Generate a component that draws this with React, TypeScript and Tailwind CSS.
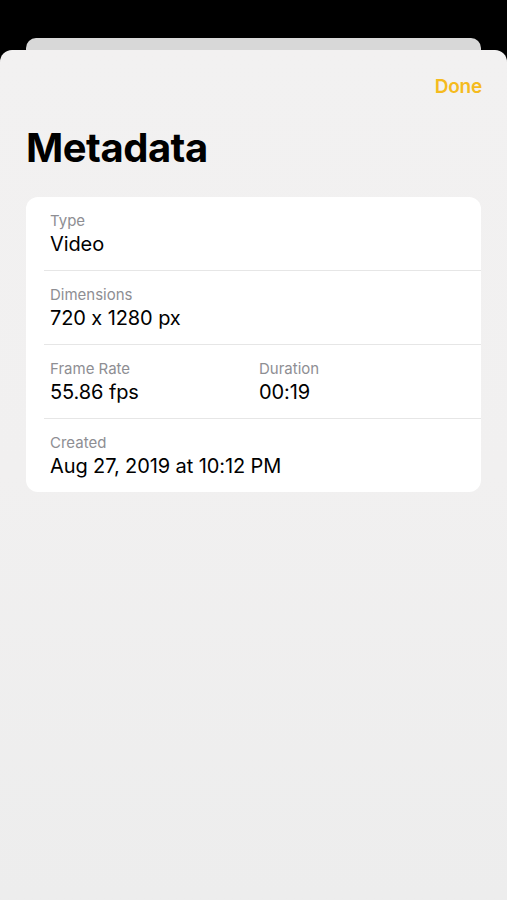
export default function App() {
  const font = { fontFamily: "Inter, 'Liberation Sans', sans-serif" };

  return (
    <div className="w-[507px] h-[900px] bg-black flex flex-col overflow-hidden" style={font}>
      {/* stacked sheet behind */}
      <div className="h-[38px] shrink-0" />
      <div className="mx-[26px] h-[12px] shrink-0 rounded-t-[10px] bg-[#d8d8d8]" />

      {/* front sheet */}
      <div className="flex-1 rounded-t-[12px] bg-gradient-to-b from-[#f2f1f1] via-[#f1f0f0] to-[#ededed] flex flex-col">
        <div className="flex justify-end px-[25px] pt-[10px] h-[64px]">
          <button className="text-[19px] font-semibold text-[#f5bb1e] leading-[24px] tracking-[-0.2px]">
            Done
          </button>
        </div>

        <h1 className="px-[26px] text-[40px] font-bold leading-[48px] text-black tracking-[-0.5px] mt-[10px]">
          Metadata
        </h1>

        <div className="mx-[26px] mt-[25px] bg-white rounded-[12px] overflow-hidden">
          <Row label="Type" value="Video" />
          <Row label="Dimensions" value="720 x 1280 px" divider />
          <div className="ml-[18px] border-t border-[#e6e6e6] flex">
            <Cell label="Frame Rate" value="55.86 fps" className="w-[209px]" />
            <Cell label="Duration" value="00:19" className="pl-0" />
          </div>
          <Row label="Created" value="Aug 27, 2019 at 10:12 PM" divider />
        </div>
      </div>
    </div>
  );
}

function Row({ label, value, divider }: { label: string; value: string; divider?: boolean }) {
  return (
    <div className={`ml-[18px] ${divider ? "border-t border-[#e6e6e6]" : ""}`}>
      <Cell label={label} value={value} />
    </div>
  );
}

function Cell({ label, value, className = "" }: { label: string; value: string; className?: string }) {
  return (
    <div className={`pl-[6px] pt-[14px] pb-[15px] ${className}`}>
      <div className="text-[15px] leading-[20px] text-[#8e8e93]">{label}</div>
      <div className="mt-[2px] text-[20px] leading-[22px] text-black tracking-[-0.1px]">{value}</div>
    </div>
  );
}
